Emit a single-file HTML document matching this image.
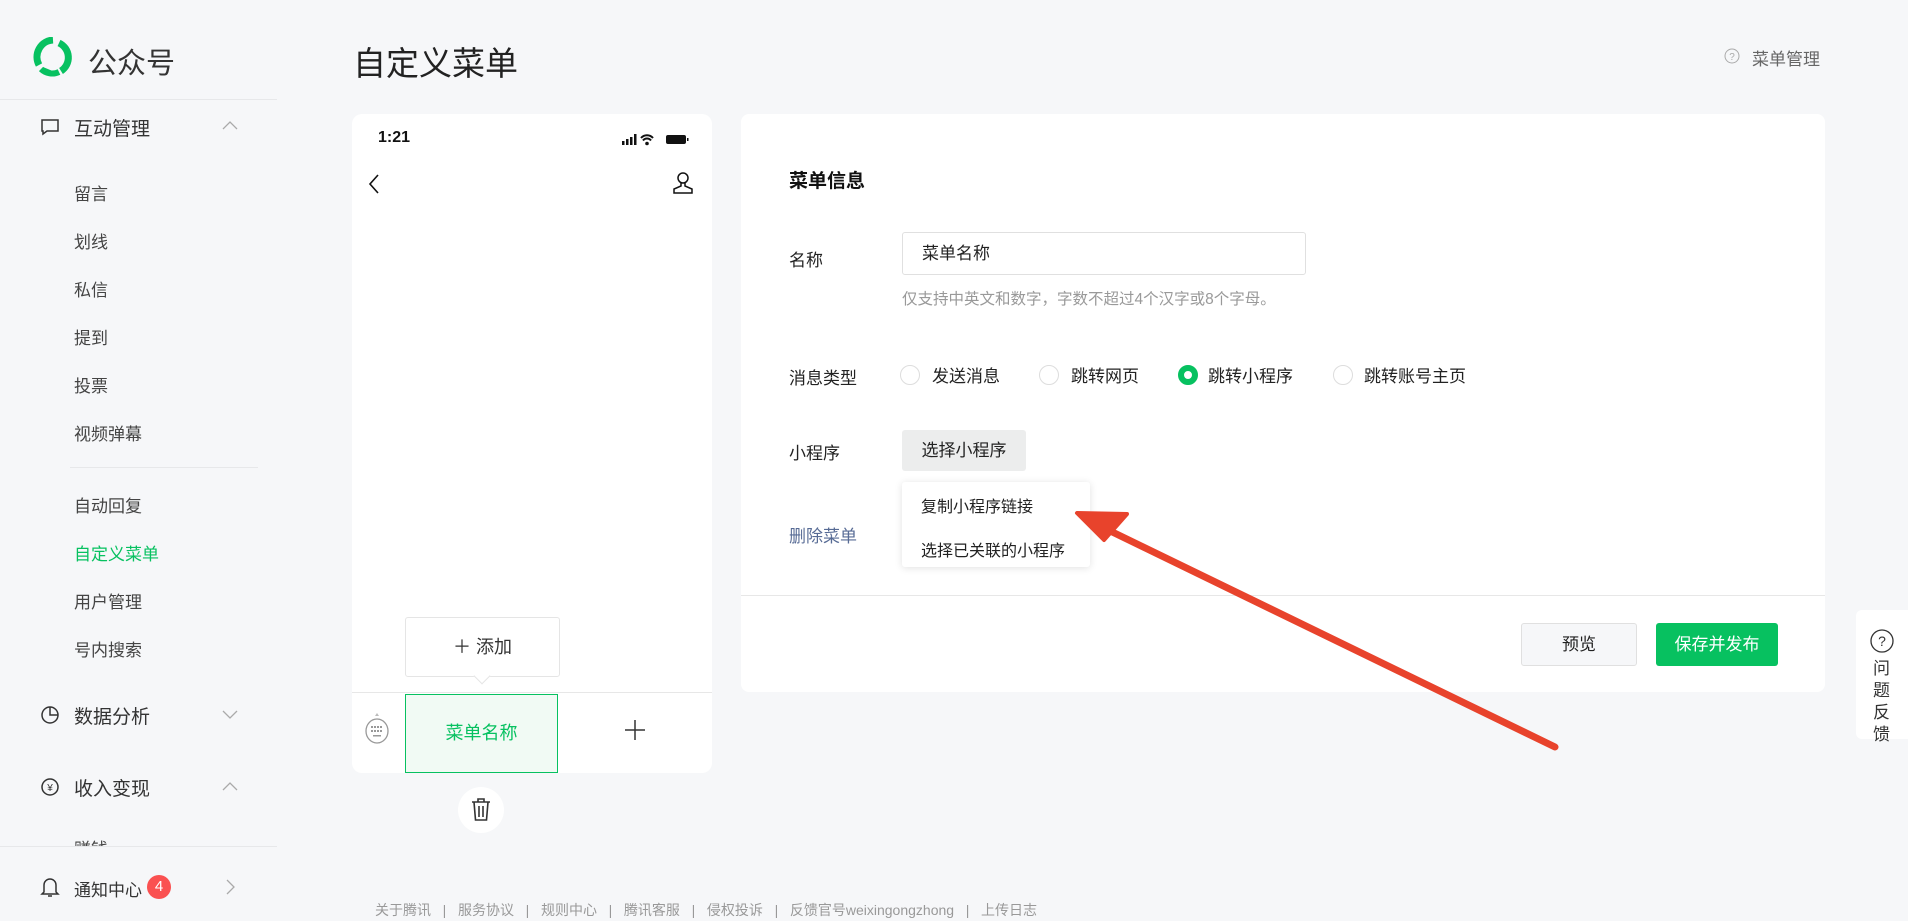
<!DOCTYPE html>
<html><head><meta charset="utf-8"><style>
*{margin:0;padding:0;box-sizing:border-box}
body{width:1908px;height:921px;background:#f6f7f9;font-family:"Liberation Sans","Noto Sans CJK SC",sans-serif;position:relative;overflow:hidden;color:#333}
.a{position:absolute;white-space:nowrap}
.nav{font-size:19px;color:#333}
.sub{font-size:17px;color:#444;left:74px}
.lbl{font-size:17px;color:#222;left:789px}
.rad{position:absolute;width:20px;height:20px;border:1px solid #ddd;border-radius:50%;background:#fff}
.rt{font-size:17px;color:#222}
.ft{font-size:14px;color:#999}
</style></head><body>
<!-- sidebar -->
<svg class="a" style="left:33px;top:37px" width="42" height="40" viewBox="0 0 42 40">
<path d="M20 3 A17 17 0 0 0 6 28" stroke="#07c160" stroke-width="7" fill="none"/>
<path d="M26 6 A16 16 0 0 1 28 34" stroke="#07c160" stroke-width="7" fill="none"/>
<path d="M10 30 L22 35 L14 38 Z" fill="#07c160"/>
<path d="M8 32 A16 16 0 0 0 26 35" stroke="#07c160" stroke-width="6" fill="none"/>
</svg>
<div class="a" style="left:88px;top:40px;font-size:29px;color:#333">公众号</div>
<div class="a" style="left:0;top:99px;width:277px;height:1px;background:#e7e8ea"></div>
<svg class="a" style="left:40px;top:117px" width="20" height="20" viewBox="0 0 20 20"><path d="M2 3h16v11H7l-4 3v-3H2z" stroke="#333" stroke-width="1.5" fill="none"/></svg>
<div class="a nav" style="left:74px;top:114px">互动管理</div>
<svg class="a" style="left:222px;top:120px" width="16" height="10"><path d="M1 9l7-7 7 7" stroke="#aaa" stroke-width="1.3" fill="none"/></svg>
<div class="a sub" style="top:180px">留言</div>
<div class="a sub" style="top:228px">划线</div>
<div class="a sub" style="top:276px">私信</div>
<div class="a sub" style="top:324px">提到</div>
<div class="a sub" style="top:372px">投票</div>
<div class="a sub" style="top:420px">视频弹幕</div>
<div class="a" style="left:70px;top:467px;width:188px;height:1px;background:#e7e8ea"></div>
<div class="a sub" style="top:492px">自动回复</div>
<div class="a sub" style="top:540px;color:#07c160">自定义菜单</div>
<div class="a sub" style="top:588px">用户管理</div>
<div class="a sub" style="top:636px">号内搜索</div>
<svg class="a" style="left:40px;top:705px" width="20" height="20" viewBox="0 0 20 20"><circle cx="10" cy="10" r="8" stroke="#333" stroke-width="1.5" fill="none"/><path d="M10 2v8h8" stroke="#333" stroke-width="1.5" fill="none"/></svg>
<div class="a nav" style="left:74px;top:702px">数据分析</div>
<svg class="a" style="left:222px;top:710px" width="16" height="10"><path d="M1 1l7 7 7-7" stroke="#aaa" stroke-width="1.3" fill="none"/></svg>
<svg class="a" style="left:40px;top:777px" width="20" height="20" viewBox="0 0 20 20"><circle cx="10" cy="10" r="8" stroke="#333" stroke-width="1.5" fill="none"/><text x="10" y="14" font-size="10" text-anchor="middle" fill="#333">¥</text></svg>
<div class="a nav" style="left:74px;top:774px">收入变现</div>
<svg class="a" style="left:222px;top:781px" width="16" height="10"><path d="M1 9l7-7 7 7" stroke="#aaa" stroke-width="1.3" fill="none"/></svg>
<div class="a" style="left:74px;top:840px;height:7px;overflow:hidden;font-size:17px;color:#444;line-height:20px">赚钱</div>
<div class="a" style="left:0;top:846px;width:277px;height:1px;background:#e7e8ea"></div>
<svg class="a" style="left:40px;top:876px" width="20" height="22" viewBox="0 0 20 22"><path d="M4 16V9a6 6 0 0 1 12 0v7l2 2H2z M8 20h4" stroke="#333" stroke-width="1.5" fill="none"/></svg>
<div class="a" style="left:74px;top:876px;font-size:17px;color:#333">通知中心</div>
<div class="a" style="left:147px;top:875px;width:24px;height:24px;border-radius:12px;background:#fa5151;color:#fff;font-size:15px;text-align:center;line-height:24px">4</div>
<svg class="a" style="left:226px;top:879px" width="10" height="16"><path d="M1 1l7 7-7 7" stroke="#aaa" stroke-width="1.3" fill="none"/></svg>

<!-- header -->
<div class="a" style="left:353px;top:37px;font-size:33px;color:#222">自定义菜单</div>
<svg class="a" style="left:1724px;top:48px" width="16" height="16"><circle cx="8" cy="8" r="7" stroke="#aaa" fill="none"/><text x="8" y="12" font-size="10" text-anchor="middle" fill="#aaa">?</text></svg>
<div class="a" style="left:1752px;top:45px;font-size:17px;color:#666">菜单管理</div>

<!-- phone -->
<div class="a" style="left:352px;top:114px;width:360px;height:659px;background:#fff;border-radius:10px"></div>
<div class="a" style="left:378px;top:129px;font-size:16px;color:#111;font-weight:bold">1:21</div>
<svg class="a" style="left:621px;top:133px" width="70" height="13"><rect x="1" y="8" width="2.5" height="4" fill="#111"/><rect x="5" y="6" width="2.5" height="6" fill="#111"/><rect x="9" y="4" width="2.5" height="8" fill="#111"/><rect x="13" y="1" width="2.5" height="11" fill="#111"/><path d="M20 5a8 8 0 0 1 12 0M22 7.5a5 5 0 0 1 8 0" stroke="#111" stroke-width="2" fill="none"/><circle cx="26" cy="10.5" r="1.8" fill="#111"/><rect x="45" y="2" width="20" height="9" rx="2" fill="#111"/><rect x="66" y="5" width="1.5" height="3" fill="#111"/></svg>
<svg class="a" style="left:367px;top:173px" width="14" height="22"><path d="M11 2L3 11l8 9" stroke="#111" stroke-width="1.6" fill="none"/></svg>
<svg class="a" style="left:672px;top:171px" width="22" height="24"><circle cx="11" cy="7" r="5" stroke="#111" stroke-width="1.5" fill="none"/><path d="M9 12v3L2 18v4h18v-4l-7-3v-3" stroke="#111" stroke-width="1.5" fill="none"/></svg>
<div class="a" style="left:352px;top:692px;width:360px;height:1px;background:#e7e7e7"></div>
<svg class="a" style="left:365px;top:712px" width="24" height="34"><path d="M12 1l2 3h-4z" fill="#bbb"/><ellipse cx="12" cy="19" rx="11" ry="12" stroke="#999" stroke-width="1.3" fill="#fff"/><g fill="#999"><rect x="6" y="14" width="2" height="2"/><rect x="9" y="14" width="2" height="2"/><rect x="12" y="14" width="2" height="2"/><rect x="15" y="14" width="2" height="2"/><rect x="6" y="18" width="2" height="2"/><rect x="9" y="18" width="2" height="2"/><rect x="12" y="18" width="2" height="2"/><rect x="15" y="18" width="2" height="2"/><rect x="8" y="23" width="8" height="1.5"/></g></svg>
<div class="a" style="left:405px;top:694px;width:153px;height:79px;border:1.5px solid #07c160;background:#f1faf4;color:#07c160;font-size:18px;text-align:center;line-height:76px">菜单名称</div>
<svg class="a" style="left:625px;top:720px" width="20" height="20"><path d="M10 0v20M0 10h20" stroke="#333" stroke-width="1.5"/></svg>
<div class="a" style="left:405px;top:617px;width:155px;height:60px;border:1px solid #e5e5e5;border-radius:3px;background:#fff;font-size:18px;color:#333;text-align:center;line-height:58px">＋ 添加</div>
<div class="a" style="left:476px;top:670px;width:12px;height:12px;background:#fff;border-right:1px solid #e5e5e5;border-bottom:1px solid #e5e5e5;transform:rotate(45deg)"></div>
<div class="a" style="left:458px;top:787px;width:46px;height:46px;border-radius:50%;background:#fff"></div>
<svg class="a" style="left:471px;top:798px" width="20" height="24"><path d="M1 4h18M7 4V1h6v3M3 4l1.5 18h11L17 4M8 8v11M12 8v11" stroke="#333" stroke-width="1.6" fill="none"/></svg>

<!-- right card -->
<div class="a" style="left:741px;top:114px;width:1084px;height:578px;background:#fff;border-radius:8px"></div>
<div class="a" style="left:741px;top:595px;width:1084px;height:1px;background:#e7e7e7"></div>
<div class="a" style="left:789px;top:166px;font-size:19px;font-weight:bold;color:#111">菜单信息</div>
<div class="a lbl" style="top:246px">名称</div>
<div class="a" style="left:902px;top:232px;width:404px;height:43px;border:1px solid #e0e0e0;border-radius:3px;font-size:17px;color:#222;padding-left:19px;line-height:41px">菜单名称</div>
<div class="a" style="left:902px;top:287px;font-size:15.5px;color:#999">仅支持中英文和数字，字数不超过4个汉字或8个字母。</div>
<div class="a lbl" style="top:364px">消息类型</div>
<div class="rad" style="left:900px;top:365px"></div><div class="a rt" style="left:932px;top:362px">发送消息</div>
<div class="rad" style="left:1039px;top:365px"></div><div class="a rt" style="left:1071px;top:362px">跳转网页</div>
<div class="rad" style="left:1178px;top:365px;border:6px solid #07c160"></div><div class="a rt" style="left:1208px;top:362px">跳转小程序</div>
<div class="rad" style="left:1333px;top:365px"></div><div class="a rt" style="left:1364px;top:362px">跳转账号主页</div>
<div class="a lbl" style="top:439px">小程序</div>
<div class="a" style="left:902px;top:430px;width:124px;height:41px;background:#eceded;border-radius:3px;font-size:17px;color:#222;text-align:center;line-height:41px">选择小程序</div>
<div class="a" style="left:902px;top:482px;width:188px;height:85px;background:#fff;border-radius:3px;box-shadow:0 1px 8px rgba(0,0,0,.12)"></div>
<div class="a" style="left:921px;top:493px;font-size:16px;color:#222">复制小程序链接</div>
<div class="a" style="left:921px;top:537px;font-size:16px;color:#222">选择已关联的小程序</div>
<div class="a" style="left:789px;top:522px;font-size:17px;color:#576b95">删除菜单</div>
<div class="a" style="left:1521px;top:623px;width:116px;height:43px;background:#f6f7f9;border:1px solid #e0e0e0;border-radius:3px;font-size:17px;color:#222;text-align:center;line-height:41px">预览</div>
<div class="a" style="left:1656px;top:623px;width:122px;height:43px;background:#07c160;border-radius:3px;font-size:17px;color:#fff;text-align:center;line-height:43px">保存并发布</div>

<!-- feedback -->
<div class="a" style="left:1856px;top:610px;width:60px;height:129px;background:#fff;border-radius:6px 0 0 6px"></div>
<svg class="a" style="left:1870px;top:629px" width="24" height="24"><circle cx="12" cy="12" r="11" stroke="#333" stroke-width="1.3" fill="none"/><text x="12" y="17" font-size="14" text-anchor="middle" fill="#333">?</text></svg>
<div class="a" style="left:1873px;top:658px;font-size:17px;color:#333;line-height:22px;white-space:normal;width:20px">问题反馈</div>

<!-- arrow -->
<svg class="a" style="left:0;top:0" width="1908" height="921"><line x1="1555" y1="747" x2="1100" y2="526" stroke="#e8432c" stroke-width="7" stroke-linecap="round"/><path d="M1077 513 L1127 514 L1104 540 Z" fill="#e8432c" stroke="#e8432c" stroke-width="4" stroke-linejoin="round"/></svg>

<!-- footer -->
<div class="a ft" style="left:375px;top:900px;word-spacing:0">关于腾讯 &nbsp;&nbsp;|&nbsp;&nbsp; 服务协议 &nbsp;&nbsp;|&nbsp;&nbsp; 规则中心 &nbsp;&nbsp;|&nbsp;&nbsp; 腾讯客服 &nbsp;&nbsp;|&nbsp;&nbsp; 侵权投诉 &nbsp;&nbsp;|&nbsp;&nbsp; 反馈官号weixingongzhong &nbsp;&nbsp;|&nbsp;&nbsp; 上传日志</div>
</body></html>
